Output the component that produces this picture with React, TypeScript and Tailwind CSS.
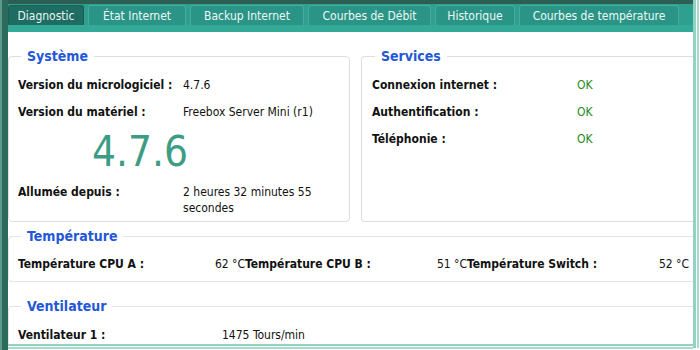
const font = { fontFamily: '"DejaVu Sans Condensed", "DejaVu Sans", sans-serif' };

const tabs = [
  { label: "Diagnostic", w: "w-[76px]", active: true },
  { label: "État Internet", w: "w-[98px]" },
  { label: "Backup Internet", w: "w-[114px]" },
  { label: "Courbes de Débit", w: "w-[123px]" },
  { label: "Historique", w: "w-[80px]" },
  { label: "Courbes de température", w: "w-[160px]" },
];

function Legend({ children }: { children: React.ReactNode }) {
  return (
    <legend className="ml-[3px] px-[6px] text-[14px] leading-[18px] font-bold text-[#2457d8]">
      {children}
    </legend>
  );
}

function Row({ label, value, labelW, valueClass = "" }: { label: string; value: React.ReactNode; labelW: string; valueClass?: string }) {
  return (
    <div className="flex items-start h-[27px]">
      <div className={`${labelW} shrink-0 font-bold`}>{label}</div>
      <div className={valueClass}>{value}</div>
    </div>
  );
}

export default function App() {
  return (
    <div className="w-[700px] h-[350px] overflow-hidden flex bg-white text-[12px] leading-[16px] text-[#111]" style={font}>
      {/* left frame */}
      <div className="w-[8px] shrink-0 flex">
        <div className="w-[2px] bg-[#5f9a8a]" />
        <div className="flex-1 bg-[#2c6a5b]" />
      </div>

      <div className="w-[685px] shrink-0 flex flex-col">
        <div className="h-[4px] shrink-0 bg-[#2b5f54]" />
        {/* tabs */}
        <div className="h-[21px] shrink-0 flex items-end gap-[4px] bg-[#2fa090]">
          {tabs.map((t) => (
            <div
              key={t.label}
              className={`${t.w} h-[20px] shrink-0 rounded-t-[3px] border border-b-0 flex items-center justify-center text-[12px] ${
                t.active
                  ? "bg-[#1f6c62] border-[#1a5e55] text-[#e8f5f2]"
                  : "bg-[#2a9486] border-[#45ad9f] text-[#eef8f6]"
              }`}
            >
              {t.label}
            </div>
          ))}
        </div>
        <div className="h-[7px] shrink-0 bg-[#33a998]" />

        {/* content */}
        <div className="flex-1 min-h-0 overflow-hidden pt-[15px]">
          <div className="flex gap-[11px]">
            <fieldset className="w-[342px] h-[175px] border border-[#dedede] rounded-[4px] px-[9px]">
              <Legend>Système</Legend>
              <div className="pt-[12px]">
                <Row label="Version du micrologiciel :" labelW="w-[165px]" value="4.7.6" />
                <Row label="Version du matériel :" labelW="w-[165px]" value="Freebox Server Mini (r1)" />
                <div className="pl-[74px] h-[56px] -mt-[3px] text-[42px] leading-[48px] text-[#3d9c84]">4.7.6</div>
                <Row label="Allumée depuis :" labelW="w-[165px]" value={<>2 heures 32 minutes 55<br />secondes</>} />
              </div>
            </fieldset>
            <fieldset className="flex-1 h-[175px] border border-r-0 border-[#dedede] rounded-l-[4px] px-[10px]">
              <Legend>Services</Legend>
              <div className="pt-[12px]">
                <Row label="Connexion internet :" labelW="w-[205px]" value="OK" valueClass="text-[#1f8a1f]" />
                <Row label="Authentification :" labelW="w-[205px]" value="OK" valueClass="text-[#1f8a1f]" />
                <Row label="Téléphonie :" labelW="w-[205px]" value="OK" valueClass="text-[#1f8a1f]" />
              </div>
            </fieldset>
          </div>

          <fieldset className="mt-[5px] h-[55px] border border-r-0 border-[#e4e4e4] rounded-l-[4px] pl-[9px]">
            <Legend>Température</Legend>
            <div className="flex pt-[11px] whitespace-nowrap">
              <div className="w-[227px] shrink-0 flex justify-between">
                <span className="font-bold">Température CPU A :</span>
                <span>62 °C</span>
              </div>
              <div className="w-[222px] shrink-0 flex justify-between">
                <span className="font-bold">Température CPU B :</span>
                <span>51 °C</span>
              </div>
              <div className="w-[222px] shrink-0 flex justify-between">
                <span className="font-bold">Température Switch :</span>
                <span>52 °C</span>
              </div>
            </div>
          </fieldset>

          <fieldset className="mt-[15px] h-[60px] border border-r-0 border-[#e4e4e4] rounded-l-[4px] pl-[9px]">
            <Legend>Ventilateur</Legend>
            <div className="flex pt-[12px] whitespace-nowrap">
              <span className="w-[204px] shrink-0 font-bold">Ventilateur 1 :</span>
              <span>1475 Tours/min</span>
            </div>
          </fieldset>
        </div>

        {/* bottom frame */}
        <div className="h-[2px] shrink-0 bg-[#93d2c1]" />
        <div className="h-[1px] shrink-0 bg-white" />
        <div className="h-[2px] shrink-0 bg-[#a6dccd]" />
        <div className="h-[1px] shrink-0 bg-white" />
      </div>

      {/* right frame */}
      <div className="flex-1 flex flex-col">
        <div className="flex-1 flex">
          <div className="w-[3px] bg-[#93d2c1]" />
          <div className="w-[1px] bg-white" />
          <div className="w-[2px] bg-[#a6dccd]" />
        </div>
        <div className="h-[2px] bg-white" />
      </div>
    </div>
  );
}
